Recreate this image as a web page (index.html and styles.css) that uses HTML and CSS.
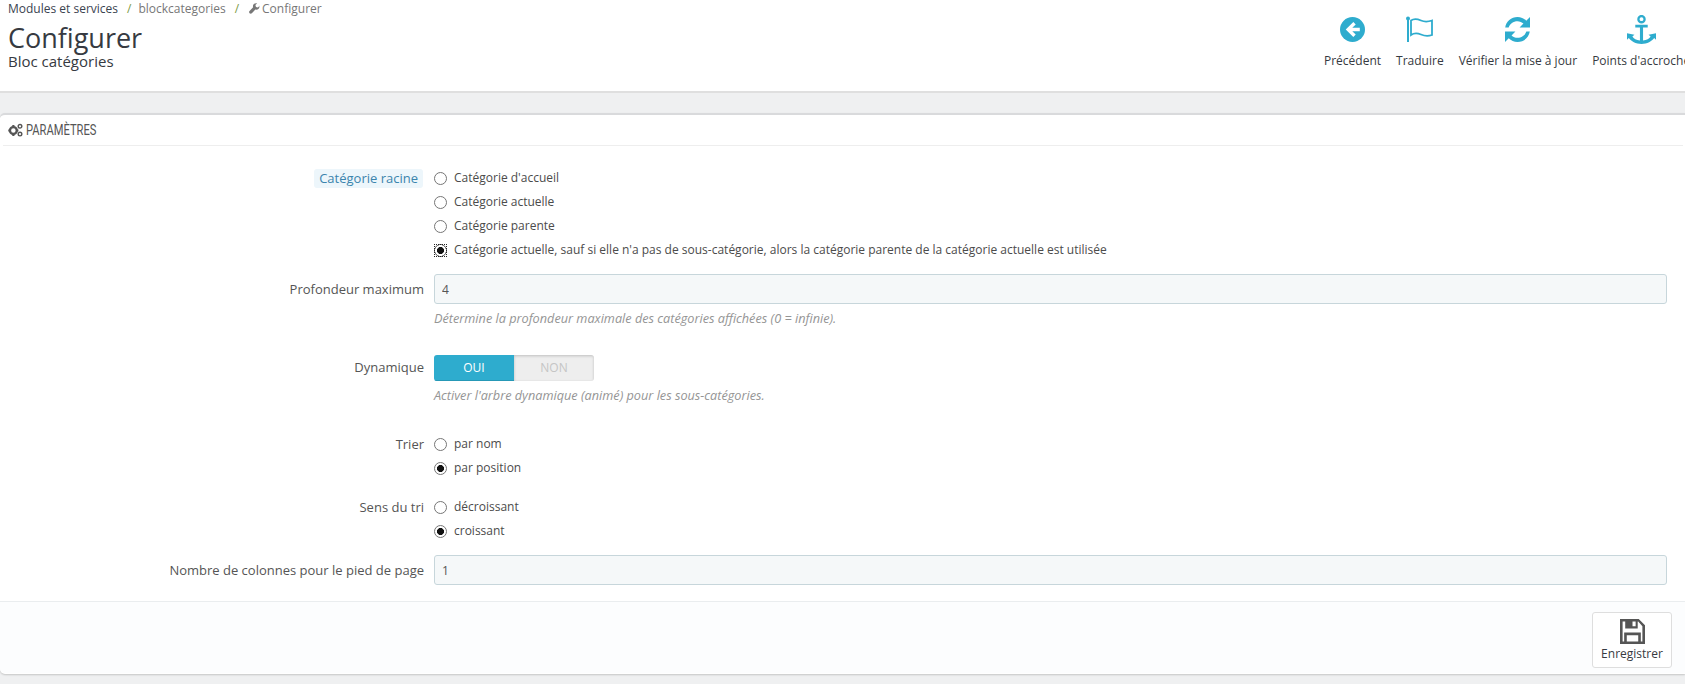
FILE: index.html
```html
<!DOCTYPE html>
<html lang="fr">
<head>
<meta charset="utf-8">
<title>Configurer</title>
<link rel="stylesheet" href="styles.css">
</head>
<body>
<header class="page-head">
  <div class="head-left">
    <nav class="crumbs">
      <span class="crumb-strong">Modules et services</span><span class="sep">/</span><span>blockcategories</span><span class="sep">/</span>
      <span class="crumb-tool"><svg class="wrench" viewBox="0 0 12 12"><path fill="#777" d="M11.6 3.1 9.7 5 7.6 4.4 7 2.3 8.9.4C7.6 0 6.2.3 5.3 1.2c-1 1-1.2 2.3-.8 3.5L.6 8.6c-.7.7-.7 1.8 0 2.5s1.800.7 2.500 0l3.900-3.900c1.200.4 2.500.1 3.500-.8.900-.9 1.200-2.300.7-3.300z"/></svg>Configurer</span>
    </nav>
    <h1>Configurer</h1>
    <h2>Bloc catégories</h2>
  </div>
  <div class="toolbar">
    <a class="tool">
      <svg viewBox="0 0 24 24"><circle cx="12" cy="12" r="12" fill="#2eacce"/><path fill="#fff" d="M12.800 4.800 5.500 12l7.300 7.200 2.300-2.300-3.300-3.200h7.200v-3.400h-7.200l3.300-3.200z"/></svg>
      <span>Précédent</span>
    </a>
    <a class="tool">
      <svg class="flag" viewBox="0 0 28 26"><circle cx="2" cy="2.500" r="2" fill="#2eacce"/><path d="M2 3v23" stroke="#2eacce" stroke-width="2" fill="none"/><path d="M5 4.500c3.500-2.500 6.500-1.500 10 0s6.500 1.500 11 0v14.500c-4.500 1.500-7.500 1-11-.5s-6.500-2-10 .5z" fill="none" stroke="#2eacce" stroke-width="1.800"/></svg>
      <span>Traduire</span>
    </a>
    <a class="tool">
      <svg viewBox="0 0 24 24"><path fill="#2eacce" d="M3.500 10H.2C1 4.500 6 0 12 0c3.300 0 6.200 1.300 8.400 3.500L24 0v10H14l3.700-3.700C16.200 4.900 14.200 4 12 4c-4 0-7.400 2.500-8.500 6zM20.500 14h3.300C23 19.500 18 24 12 24c-3.300 0-6.200-1.300-8.400-3.500L0 24V14h10l-3.700 3.700C7.800 19.100 9.800 20 12 20c4 0 7.400-2.500 8.500-6z"/></svg>
      <span>Vérifier la mise à jour</span>
    </a>
    <a class="tool">
      <svg class="anchor" viewBox="0 0 28 28"><circle cx="14" cy="4" r="3" fill="none" stroke="#2eacce" stroke-width="2.200"/><path fill="#2eacce" d="M8 9.500h12V12h-4.500v12.500c3.500-.3 6-1.800 7.300-3.800L20.800 19 28 17.500V24l-1.800-1.700C24 25.500 19.500 28 14 28S4 25.500 1.800 22.300L0 24v-6.500L7.200 19l-2 1.700c1.300 2 3.800 3.500 7.300 3.800V12H8z"/></svg>
      <span>Points d'accroche</span>
    </a>
  </div>
</header>

<main class="panel">
  <div class="panel-heading">
    <svg class="cogs" viewBox="0 0 14 13"><g fill="#555"><circle cx="5" cy="7" r="3.200" fill="none" stroke="#555" stroke-width="2.200"/><path d="M4 1.800h2v1.600H4zM4 10.600h2v1.600H4zM.300 6h1.600v2H.300zM8.100 6h1.600v2H8.100z"/><circle cx="11.200" cy="3" r="1.700" fill="none" stroke="#555" stroke-width="1.300"/><circle cx="11.200" cy="10.300" r="1.700" fill="none" stroke="#555" stroke-width="1.300"/></g></svg>
    <span>PARAMÈTRES</span>
  </div>
  <form class="form">
    <div class="row row-root">
      <div class="label"><span class="label-hint">Catégorie racine</span></div>
      <div class="radios">
        <label class="radio"><input type="radio" name="root"><span>Catégorie d'accueil</span></label>
        <label class="radio"><input type="radio" name="root"><span>Catégorie actuelle</span></label>
        <label class="radio"><input type="radio" name="root"><span>Catégorie parente</span></label>
        <label class="radio radio-focus"><input type="radio" name="root" checked><span>Catégorie actuelle, sauf si elle n'a pas de sous-catégorie, alors la catégorie parente de la catégorie actuelle est utilisée</span></label>
      </div>
    </div>
    <div class="row row-depth">
      <div class="label label-input">Profondeur maximum</div>
      <div>
        <input class="text" type="text" value="4">
        <p class="help">Détermine la profondeur maximale des catégories affichées (0 = infinie).</p>
      </div>
    </div>
    <div class="row row-dyn">
      <div class="label label-switch">Dynamique</div>
      <div>
        <div class="switch"><span class="on">OUI</span><span class="off">NON</span></div>
        <p class="help">Activer l'arbre dynamique (animé) pour les sous-catégories.</p>
      </div>
    </div>
    <div class="row row-sort">
      <div class="label">Trier</div>
      <div class="radios">
        <label class="radio"><input type="radio" name="sort"><span>par nom</span></label>
        <label class="radio"><input type="radio" name="sort" checked><span>par position</span></label>
      </div>
    </div>
    <div class="row row-way">
      <div class="label">Sens du tri</div>
      <div class="radios">
        <label class="radio"><input type="radio" name="way"><span>décroissant</span></label>
        <label class="radio"><input type="radio" name="way" checked><span>croissant</span></label>
      </div>
    </div>
    <div class="row row-cols">
      <div class="label label-input">Nombre de colonnes pour le pied de page</div>
      <div><input class="text" type="text" value="1"></div>
    </div>
  </form>
  <footer class="panel-footer">
    <button class="save" type="button">
      <svg viewBox="0 0 24 24"><path fill="#555" fill-rule="evenodd" d="M0 0h18l6 6v18H0zM2.500 2.500v19H4V13h16v8.500h1.500V7L17.500 2.500H17V9H5V2.500zM6.500 15.500v6h11v-6zM12 2.500V7h3V2.500z"/></svg>
      <span>Enregistrer</span>
    </button>
  </footer>
</main>
</body>
</html>
```
FILE: styles.css
```css
* { box-sizing: border-box; }
html, body { margin: 0; height: 100%; }
body {
  background: #eff0f1;
  color: #555;
  font: 12px/1.42857 "Open Sans", sans-serif;
  overflow: hidden;
}
.page-head {
  height: 93px;
  background: #fff;
  border-bottom: 2px solid #dfdfdf;
  display: flex;
  justify-content: space-between;
  overflow: hidden;
}
.head-left { padding-left: 8px; }
.crumbs { height: 18px; padding-top: 1px; line-height: 15px; color: #777; display: flex; white-space: pre; }
.crumb-strong { color: #3a4350; }
.sep { color: #7d9b46; margin: 0 7px 0 9px; }
.crumb-tool { display: flex; align-items: center; height: 15px; margin-left: 3px; }
.wrench { width: 11px; height: 11px; margin-right: 2px; }
h1 {
  margin: 7px 0 0;
  font-size: 27px;
  line-height: 26px;
  font-weight: 400;
  color: #363a41;
}
h2 {
  margin: 0;
  font-size: 15px;
  line-height: 20px;
  font-weight: 400;
  color: #363a41;
}
.toolbar { display: flex; padding-top: 17px; width: 376px; flex: none; white-space: nowrap; }
.tool { display: flex; flex-direction: column; align-items: center; flex: none; color: #363a41; font-size: 12px; margin-left: 15px; }
.tool svg { width: 25px; height: 25px; margin-bottom: 10px; display: block; }
.tool svg.flag { width: 28px; height: 26px; margin: -1px 0 10px; }
.tool svg.anchor { width: 29px; height: 29px; margin: -2px 0 8px; }
.panel {
  margin-top: 20px;
  height: 561px;
  background: #fff;
  border-top: 2px solid #d9dadc;
  border-radius: 5px 0 0 5px;
  box-shadow: 0 1px 2px rgba(0,0,0,.18);
}
.panel-heading {
  height: 31px;
  margin: 0 2px 0 3px;
  border-bottom: 1px solid #eee;
  padding-left: 5px;
  display: flex;
  align-items: center;
  gap: 3px;
  font-family: "Roboto", sans-serif;
  font-size: 15.500px;
  color: #555;
}
.panel-heading span { display: inline-block; transform: scaleX(.72); transform-origin: 0 50%; }
.cogs { width: 15px; height: 14px; }
.form { padding-top: 23px; height: 455px; }
.row { display: grid; grid-template-columns: 424px 1233px; column-gap: 10px; color: #555; }
.label { text-align: right; font-size: 13px; line-height: 18px; }
.label-hint { display: inline-block; background: #edf6fb; color: #3b84ad; padding: 0 5px; margin-right: 1px; height: 19px; line-height: 19px; border-radius: 3px; }
.radios { display: flex; flex-direction: column; gap: 6px; }
.radio { display: flex; align-items: center; height: 18px; color: #4b4b4b; font-size: 12px; }
.radio input {
  appearance: none;
  margin: 0 7px 0 0;
  width: 13px;
  height: 13px;
  flex: none;
  border: 1px solid #767676;
  border-radius: 50%;
  background: #fff;
}
.radio input:checked { background: radial-gradient(circle, #111 0 3.200px, #fff 3.800px); }
.radio-focus input,
.radio-focus input:checked {
  border: 0;
  border-radius: 0;
  outline: 1px dotted #222;
  outline-offset: -1px;
  background: radial-gradient(circle, #111 0 3.200px, #fff 3.800px 5.200px, #767676 5.500px 6.200px, #fff 6.500px);
}
.text {
  display: block;
  width: 100%;
  height: 30px;
  padding: 0 7px;
  border: 1px solid #c7d6db;
  border-radius: 3px;
  background: #f5f8f9;
  color: #555;
  font: 12px "Open Sans", sans-serif;
}
.label-input { line-height: 30px; }
.label-switch { line-height: 24px; }
.help { margin: 6px 0 0; font-size: 12.700px; font-style: italic; color: #959595; line-height: 17px; }
.row-depth { margin-top: 15px; }
.row-dyn { margin-top: 28px; }
.row-sort { margin-top: 31px; }
.row-way { margin-top: 21px; }
.row-cols { margin-top: 15px; }
.switch { display: flex; width: 160px; height: 26px; line-height: 25px; text-align: center; border-radius: 3px; overflow: hidden; }
.on { width: 80px; background: #2eacce; color: #fff; border-bottom: 1px solid #2698b6; }
.off { width: 80px; background: #eee; color: #c5c5c5; box-shadow: inset 0 1px 3px rgba(0,0,0,.2); }
.panel-footer {
  height: 72px;
  background: #fcfdfe;
  border-top: 1px solid #eaedef;
  display: flex;
  justify-content: flex-end;
  padding: 10px 13px 0 0;
  border-radius: 0 0 0 5px;
}
.save {
  width: 80px;
  height: 56px;
  padding: 6px 0 0;
  background: #fff;
  border: 1px solid #dedede;
  border-radius: 3px;
  display: flex;
  flex-direction: column;
  align-items: center;
  color: #363a41;
  font: 12px/16px "Open Sans", sans-serif;
}
.save svg { width: 25px; height: 25px; margin-bottom: 2px; }
```
